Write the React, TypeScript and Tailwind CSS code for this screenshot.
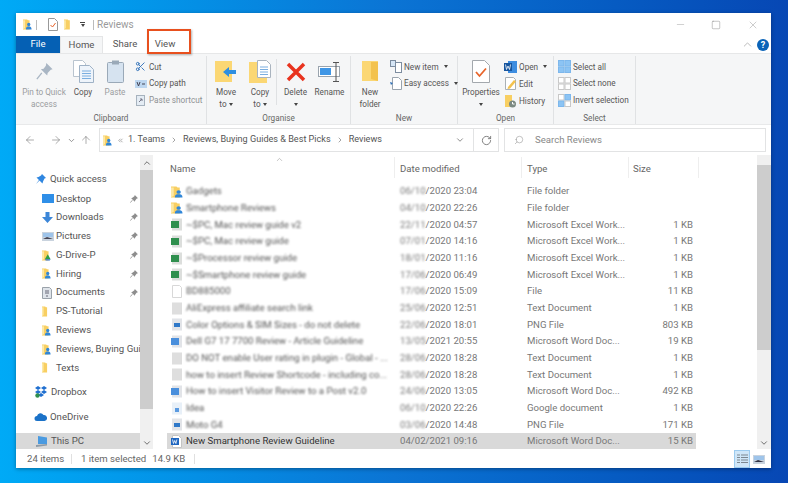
import { ReactNode } from "react";
import { ArrowLeft, ArrowRight, ArrowUp, ChevronDown, ChevronRight, ChevronUp, ChevronsLeft, RotateCw, Scissors, Search, Minus, Square, X } from "lucide-react";

// small file-explorer icons
const Folder = ({ w = 8, h = 13, person = false, drive = false }: { w?: number; h?: number; person?: boolean; drive?: boolean }) => (
  <svg width={w + 3} height={h} viewBox="0 0 11 13" preserveAspectRatio="none" className="shrink-0">
    <path d="M0 0.5h5l1 1h2v11H0z" fill="#f8cf62" />
    <path d="M0 1.5h2.5v9L0 12.5z" fill="#fde9a6" />
    {person && <circle cx="7" cy="6.5" r="2" fill="#2f86d8" />}
    {person && <path d="M3.5 12.5c0-3 1.5-3.5 3.5-3.5s3.5.5 3.5 3.5z" fill="#2f86d8" />}
    {drive && <path d="M7 5l3.5 6h-7z" fill="#2f9e44" />}
    {drive && <path d="M3.5 11h7l-1 1.5h-5z" fill="#2f70d8" />}
  </svg>
);

const Doc = ({ children }: { children?: ReactNode }) => (
  <svg width="12" height="13" viewBox="0 0 12 13" className="shrink-0">
    <path d="M1.5.5h6l3 3v9h-9z" fill="#fff" stroke="#c4c4c4" />
    {children}
  </svg>
);

const FileIcon = ({ kind }: { kind: string }) => {
  if (kind === "folder") return <span className="blur-[.6px] flex"><Folder w={9} h={12} person /></span>;
  if (kind === "excel")
    return (
      <span className="blur-[.7px] flex">
        <svg width="12" height="13" viewBox="0 0 12 13">
          <rect x="1" y="0.5" width="10" height="12" fill="#dcdedc" />
          <rect x="0" y="3" width="8" height="7" fill="#2f8f4e" />
        </svg>
      </span>
    );
  if (kind === "text")
    return (
      <span className="blur-[.7px] flex">
        <svg width="12" height="13" viewBox="0 0 12 13">
          <rect x="1" y="0.5" width="10" height="12" fill="#dedede" />
        </svg>
      </span>
    );
  if (kind === "png")
    return (
      <span className="blur-[.7px] flex">
        <svg width="12" height="13" viewBox="0 0 12 13">
          <rect x="1" y="0.5" width="10" height="12" fill="#e2e4e8" />
          <rect x="3" y="5" width="6" height="4" fill="#2f78c8" />
        </svg>
      </span>
    );
  if (kind === "gdoc")
    return (
      <span className="blur-[.6px] flex">
        <svg width="12" height="13" viewBox="0 0 12 13">
          <rect x="1" y="0.5" width="10" height="12" fill="#e8f0f8" />
          <rect x="4" y="6" width="4" height="4" fill="#5b9ae0" />
        </svg>
      </span>
    );
  if (kind === "word")
    return (
      <span className="blur-[.7px] flex">
        <svg width="12" height="13" viewBox="0 0 12 13">
          <rect x="1" y="0.5" width="10" height="12" fill="#e2e4e8" />
          <rect x="0" y="3" width="8" height="7" fill="#4a8fdc" />
        </svg>
      </span>
    );
  if (kind === "wordsharp")
    return (
      <Doc>
        <rect x="0" y="3" width="8" height="7" fill="#1f66c0" />
        <path d="M1.5 4.5l1 4 1.2-3 1.2 3 1-4" stroke="#fff" strokeWidth=".8" fill="none" />
      </Doc>
    );
  return (
    <span className="blur-[.4px] flex">
      <svg width="12" height="13" viewBox="0 0 12 13" className="shrink-0">
        <path d="M1.5.5h7l2 2v10h-9z" fill="#fff" stroke="#d8d8d8" />
      </svg>
    </span>
  );
};

const SmallPin = () => (
  <svg width="8" height="8" viewBox="0 0 10 10">
    <path d="M6 0l4 4-1.5.5L6.5 7 6 8.5 1.5 4 3 3.5 5.5 1.5z" fill="#8d8d8d" />
    <path d="M3 6.5L0.5 9.5" stroke="#8d8d8d" />
  </svg>
);

const DownTri = () => <span className="inline-block w-0 h-0 border-x-[2.5px] border-x-transparent border-t-[3px] border-t-[#444]" />;

const LargeBtn = ({ w, icon, l1, l2, gray, tri }: { w: number; icon: ReactNode; l1: string; l2?: string; gray?: boolean; tri?: boolean }) => (
  <div className={`flex flex-col items-center shrink-0 ${gray ? "text-[#9b9da0]" : "text-[#555]"}`} style={{ width: w }}>
    <div className="h-[29px] shrink-0 pt-[2px] flex items-center justify-center">{icon}</div>
    <div className="leading-[12px] h-[12px] shrink-0 mt-[1px] whitespace-nowrap">{l1}</div>
    <div className="leading-[12px] flex items-center gap-[2px] h-[12px] shrink-0 whitespace-nowrap">
      {l2}
      {tri && <DownTri />}
    </div>
  </div>
);

const SmallBtn = ({ icon, label, gray, tri, h = 16.7 }: { icon: ReactNode; label: string; gray?: boolean; tri?: boolean; h?: number }) => (
  <div className={`flex items-center gap-[2px] whitespace-nowrap ${gray ? "text-[#8f9193]" : "text-[#555]"}`} style={{ height: h }}>
    <span className="w-[13px] flex justify-center shrink-0">{icon}</span>
    {label}
    {tri && <span className="ml-[3px] flex"><DownTri /></span>}
  </div>
);

const RibbonGroup = ({ w, label, children }: { w: number; label: string; children: ReactNode }) => (
  <div className="flex flex-col shrink-0 border-r border-[#e0e2e4] mt-[2px]" style={{ width: w }}>
    <div className="flex-1 flex min-h-0">{children}</div>
    <div className="h-[12px] leading-[12px] text-center text-[#666]">{label}</div>
  </div>
);

const FolderLarge = () => (
  <svg width="16" height="21" viewBox="0 0 16 21">
    <path d="M0 0h16v20H0z" fill="#fbd774" />
    <path d="M9 1h7v19l-7-2z" fill="#f3c24e" />
  </svg>
);

const Grid4 = ({ a, b, c, d }: { a: string; b: string; c: string; d: string }) => (
  <svg width="13" height="13" viewBox="0 0 13 13">
    <rect x=".5" y=".5" width="5.5" height="5.5" fill={a} stroke={a === "#fff" ? "#c8c8c8" : "#7db7ec"} />
    <rect x="7" y=".5" width="5.5" height="5.5" fill={b} stroke={b === "#fff" ? "#c8c8c8" : "#7db7ec"} />
    <rect x=".5" y="7" width="5.5" height="5.5" fill={c} stroke={c === "#fff" ? "#c8c8c8" : "#7db7ec"} />
    <rect x="7" y="7" width="5.5" height="5.5" fill={d} stroke={d === "#fff" ? "#c8c8c8" : "#7db7ec"} />
  </svg>
);

const Ribbon = () => (
  <div className="h-[72px] bg-[#f5f6f7] border-t border-[#e6e7e8] border-b border-b-[#e8e9ea] flex text-[8.2px] shrink-0">
    <RibbonGroup w={191} label="Clipboard">
      <div className="flex pl-[7px]">
        <LargeBtn
          w={42}
          gray
          icon={
            <svg width="17" height="18" viewBox="0 0 18 20">
              <path d="M11 0l7 7-2 .5-3.5 3.500-.5 3L5 7l3-.5L10.500 3z" fill="#a9b6c4" />
              <path d="M6 11l-5.500 7" stroke="#a9b6c4" strokeWidth="1.500" />
            </svg>
          }
          l1="Pin to Quick"
          l2="access"
        />
        <LargeBtn
          w={36}
          icon={
            <svg width="21" height="23" viewBox="0 0 21 23">
              <path d="M.5.5h9l3 3v13H.5z" fill="#fff" stroke="#b9c4cf" />
              <path d="M6.500 5.500h10l4 4v13h-14z" fill="#eef4fb" stroke="#9fb2c6" />
              <path d="M9 11h9M9 13.500h9M9 16h9M9 18.500h9" stroke="#7aaee0" />
            </svg>
          }
          l1="Copy"
        />
        <LargeBtn
          w={28}
          gray
          icon={
            <svg width="17" height="23" viewBox="0 0 17 23">
              <rect x=".5" y="2.500" width="16" height="20" rx="1" fill="#d6e3f0" stroke="#9aa9b8" />
              <rect x="5" y=".5" width="7" height="4" fill="#9aa9b8" />
            </svg>
          }
          l1="Paste"
        />
        <div className="pl-[5px] pt-[2.500px]">
          <SmallBtn icon={<Scissors size={11} className="text-[#2f70b8]" />} label="Cut" />
          <SmallBtn
            icon={
              <svg width="12" height="8" viewBox="0 0 12 8">
                <rect width="12" height="8" fill="#bcd6f0" />
                <path d="M2 2l1.500 4L5 2M7 4h3" stroke="#445" fill="none" />
              </svg>
            }
            label="Copy path"
          />
          <SmallBtn
            gray
            icon={
              <svg width="9" height="12" viewBox="0 0 9 12">
                <rect x=".5" y="1.500" width="8" height="10" fill="#e4ecf4" stroke="#a6b2be" />
                <path d="M3 8l3-3M4 5h2v2" stroke="#778" fill="none" />
              </svg>
            }
            label="Paste shortcut"
          />
        </div>
      </div>
    </RibbonGroup>
    <RibbonGroup w={144} label="Organise">
      <div className="flex pl-[1px]">
        <LargeBtn
          w={36}
          tri
          icon={
            <svg width="22" height="22" viewBox="0 0 22 22">
              <path d="M0 0h17v21H0z" fill="#fbd774" />
              <path d="M8 11l6-5v3h7v4h-7v3z" fill="#2f8fe0" />
            </svg>
          }
          l1="Move"
          l2="to"
        />
        <LargeBtn
          w={32}
          tri
          icon={
            <svg width="22" height="24" viewBox="0 0 22 24">
              <path d="M0 2h18v21H0z" fill="#fbd774" />
              <path d="M8.500.5h9l4 4v13h-13z" fill="#fff" stroke="#aab4bf" />
              <path d="M11 7h8M11 9.500h8M11 12h8M11 14.500h8" stroke="#7aaee0" />
            </svg>
          }
          l1="Copy"
          l2="to"
        />
        <div className="w-px bg-[#dfe1e3] h-[46px] mt-[3px] mr-[1px]" />
        <LargeBtn
          w={35}
          tri
          icon={
            <svg width="20" height="20" viewBox="0 0 20 20">
              <path d="M2 2l16 16M18 2L2 18" stroke="#e8331e" strokeWidth="3.500" />
            </svg>
          }
          l1="Delete"
        />
        <LargeBtn
          w={33}
          icon={
            <svg width="24" height="20" viewBox="0 0 24 20">
              <rect x=".5" y="4.500" width="21" height="10" fill="#fff" stroke="#9aa4ae" />
              <rect x="2" y="6" width="11" height="7" fill="#3f96e6" />
              <path d="M18 1v18M15 .5h6M15 19.500h6" stroke="#555" />
            </svg>
          }
          l1="Rename"
        />
      </div>
    </RibbonGroup>
    <RibbonGroup w={107} label="New">
      <div className="flex">
        <LargeBtn w={38} icon={<FolderLarge />} l1="New" l2="folder" />
        <div className="pt-[2.500px]">
          <SmallBtn
            tri
            icon={
              <svg width="12" height="13" viewBox="0 0 12 13">
                <rect x=".5" y=".5" width="5" height="6" fill="#d6e6f6" stroke="#7d8da0" />
                <rect x="5.500" y="2.500" width="6" height="10" fill="#fff" stroke="#7d8da0" />
              </svg>
            }
            label="New item"
          />
          <SmallBtn
            tri
            icon={
              <svg width="12" height="13" viewBox="0 0 12 13">
                <path d="M2.500.5h6l3 3v9h-9z" fill="#fff" stroke="#9aa4ae" />
                <path d="M0 5l3 1-2 2z" fill="#2f70b8" />
              </svg>
            }
            label="Easy access"
          />
        </div>
      </div>
    </RibbonGroup>
    <RibbonGroup w={96} label="Open">
      <div className="flex">
        <LargeBtn
          w={46}
          tri
          icon={
            <svg width="18" height="23" viewBox="0 0 18 23">
              <path d="M.5.5h12l5 5v17H.5z" fill="#fff" stroke="#a3a8ad" />
              <path d="M4 12l3.500 4L14 8.500" stroke="#e8642a" strokeWidth="1.800" fill="none" />
            </svg>
          }
          l1="Properties"
        />
        <div className="pt-[2.500px]">
          <SmallBtn
            tri
            icon={
              <svg width="13" height="12" viewBox="0 0 13 12">
                <rect x="4" width="9" height="12" fill="#3d8de0" />
                <rect y="2" width="8" height="8" fill="#17569f" />
                <path d="M1.500 3.500l1 5 1.500-3.500 1.500 3.500 1-5" stroke="#fff" strokeWidth=".8" fill="none" />
              </svg>
            }
            label="Open"
          />
          <SmallBtn
            h={17.5}
            icon={
              <svg width="12" height="13" viewBox="0 0 12 13">
                <path d="M.5.5h8l2 2v10H.5z" fill="#fff" stroke="#aab0b5" />
                <path d="M3 10l6-7 2 1.500-6 7-2.500.5z" fill="#f3c24e" />
              </svg>
            }
            label="Edit"
          />
          <SmallBtn
            h={17.5}
            icon={
              <svg width="11" height="13" viewBox="0 0 11 13">
                <path d="M0 0h7v12H0z" fill="#f8cf62" />
                <circle cx="7.500" cy="9" r="3.500" fill="#7c8a82" />
                <path d="M7.500 7v2h2" stroke="#fff" fill="none" />
              </svg>
            }
            label="History"
          />
        </div>
      </div>
    </RibbonGroup>
    <RibbonGroup w={82} label="Select">
      <div className="pl-[4px] pt-[2.500px]">
        <SmallBtn icon={<Grid4 a="#8cc4f4" b="#8cc4f4" c="#8cc4f4" d="#8cc4f4" />} label="Select all" />
        <SmallBtn icon={<Grid4 a="#fff" b="#fff" c="#fff" d="#fff" />} label="Select none" />
        <SmallBtn icon={<Grid4 a="#fff" b="#8cc4f4" c="#8cc4f4" d="#fff" />} label="Invert selection" />
      </div>
    </RibbonGroup>
  </div>
);

const navItems: { label: string; icon: ReactNode; pin?: boolean }[] = [
  {
    label: "Desktop",
    pin: true,
    icon: (
      <svg width="12" height="9" viewBox="0 0 12 9">
        <rect width="12" height="9" fill="#2f8fe8" />
      </svg>
    ),
  },
  {
    label: "Downloads",
    pin: true,
    icon: (
      <svg width="11" height="11" viewBox="0 0 11 11">
        <path d="M3.500 0h4v5H11L5.500 11 0 5h3.500z" fill="#3b86d8" />
      </svg>
    ),
  },
  {
    label: "Pictures",
    pin: true,
    icon: (
      <svg width="12" height="9" viewBox="0 0 12 9">
        <rect width="12" height="9" fill="#c9d3de" />
        <rect x="1" y="1" width="10" height="4" fill="#9ec4ea" />
        <path d="M1 7l4-2 6 2z" fill="#445" />
      </svg>
    ),
  },
  { label: "G-Drive-P", pin: true, icon: <Folder drive w={6} h={11} /> },
  { label: "Hiring", pin: true, icon: <Folder person w={6} h={11} /> },
  {
    label: "Documents",
    pin: true,
    icon: (
      <svg width="10" height="12" viewBox="0 0 10 12">
        <path d="M.5.5h7l2 2v9h-9z" fill="#dfe4ea" stroke="#9aa2aa" />
        <path d="M3 4h4M3 6h4M5 8v2" stroke="#667" />
      </svg>
    ),
  },
  { label: "PS-Tutorial", icon: <Folder w={4} h={11} /> },
  { label: "Reviews", icon: <Folder person w={6} h={11} /> },
  { label: "Reviews, Buying Guides & Best Picks", icon: <Folder person w={6} h={11} /> },
  { label: "Texts", icon: <Folder w={4} h={11} /> },
];

const files = [
  { name: "Gadgets", pre: "06/10", date: "/2020 23:04", type: "File folder", size: "", icon: "folder" },
  { name: "Smartphone Reviews", pre: "04/10", date: "/2020 22:26", type: "File folder", size: "", icon: "folder" },
  { name: "~$PC, Mac review guide v2", pre: "22/11", date: "/2020 04:57", type: "Microsoft Excel Work...", size: "1 KB", icon: "excel" },
  { name: "~$PC, Mac review guide", pre: "07/01", date: "/2020 14:16", type: "Microsoft Excel Work...", size: "1 KB", icon: "excel" },
  { name: "~$Processor review guide", pre: "18/01", date: "/2020 11:16", type: "Microsoft Excel Work...", size: "1 KB", icon: "excel" },
  { name: "~$Smartphone review guide", pre: "17/06", date: "/2020 06:49", type: "Microsoft Excel Work...", size: "1 KB", icon: "excel" },
  { name: "BD885000", pre: "17/06", date: "/2020 15:09", type: "File", size: "11 KB", icon: "blank" },
  { name: "AliExpress affiliate search link", pre: "25/06", date: "/2020 12:51", type: "Text Document", size: "1 KB", icon: "text" },
  { name: "Color Options & SIM Sizes - do not delete", pre: "22/06", date: "/2020 18:01", type: "PNG File", size: "803 KB", icon: "png" },
  { name: "Dell G7 17 7700 Review - Article Guideline", pre: "13/05", date: "/2021 20:55", type: "Microsoft Word Doc...", size: "19 KB", icon: "word" },
  { name: "DO NOT enable User rating in plugin - Global - ...", pre: "28/06", date: "/2020 18:28", type: "Text Document", size: "1 KB", icon: "text" },
  { name: "how to insert Review Shortcode - including co...", pre: "28/06", date: "/2020 18:28", type: "Text Document", size: "1 KB", icon: "text" },
  { name: "How to insert Visitor Review to a Post v2.0", pre: "24/06", date: "/2020 13:05", type: "Microsoft Word Doc...", size: "492 KB", icon: "word" },
  { name: "Idea", pre: "06/10", date: "/2020 22:26", type: "Google document", size: "1 KB", icon: "gdoc" },
  { name: "Moto G4", pre: "03/06", date: "/2020 14:48", type: "PNG File", size: "171 KB", icon: "png" },
];

const Row = ({ f, selected }: { f: (typeof files)[number]; selected?: boolean }) => (
  <div className={`flex h-[16.67px] pt-[1px] items-center w-[529px] whitespace-nowrap ${selected ? "bg-[#d9d9d9]" : ""}`}>
    <div className="w-[228px] flex items-center pl-[4px] gap-[3px] shrink-0">
      <span className="w-[12px] flex justify-center"><FileIcon kind={selected ? "wordsharp" : f.icon} /></span>
      <span className={selected ? "text-[#333]" : "text-[#555] blur-[1.1px]"}>{f.name}</span>
    </div>
    <div className="w-[127px] pl-[5px] shrink-0 text-[#777]">
      <span className={selected ? "" : "inline-block blur-[1.1px]"}>{f.pre}</span>
      {f.date}
    </div>
    <div className="w-[107px] pl-[5px] shrink-0 text-[#777]">{f.type}</div>
    <div className="w-[67px] pr-[3px] text-right shrink-0 text-[#777]">{f.size}</div>
  </div>
);

export default function App() {
  return (
    <div
      className="w-[788px] h-[483px] overflow-hidden pt-[13px] pl-[16px] bg-linear-to-r from-[#00aaf6] via-[#0b74d4] to-[#0747b4]"
      style={{ fontFamily: "Roboto, sans-serif" }}
    >
      <div className="w-[755px] h-[455px] bg-white flex flex-col shadow-[0_1px_4px_rgba(0,0,0,.35)] text-[9.6px]">
        {/* title bar */}
        <div className="h-[23px] flex items-center shrink-0 pl-[7px]">
          <Folder person w={6} h={11} />
          <div className="w-px h-[10px] bg-[#bbb] ml-[4px]" />
          <div className="ml-[11px] flex">
            <svg width="10" height="13" viewBox="0 0 10 13">
              <path d="M.5.5h6l3 3v9h-9z" fill="#fff" stroke="#999" />
              <path d="M2.500 7l2 2 3-4" stroke="#e8642a" fill="none" />
            </svg>
          </div>
          <div className="ml-[6px] flex"><Folder w={5} h={11} /></div>
          <div className="ml-[8px] flex flex-col items-center gap-[1px]">
            <div className="w-[5px] h-px bg-[#444]" />
            <DownTri />
          </div>
          <div className="w-px h-[10px] bg-[#bbb] ml-[8px]" />
          <div className="ml-[3px] text-[#9a9a9a] text-[10px]">Reviews</div>
          <div className="ml-auto flex items-center text-[#9a9a9a]">
            <Minus size={11} strokeWidth={1} className="mr-[25px]" />
            <Square size={10} strokeWidth={1} className="mr-[26px] text-[#777]" />
            <X size={12} strokeWidth={1} className="mr-[12px]" />
          </div>
        </div>

        {/* tabs */}
        <div className="h-[17px] flex items-stretch shrink-0 text-[#555] relative z-10">
          <div className="w-[44px] bg-[#0560b4] text-white flex items-center justify-center">File</div>
          <div className="w-[43px] bg-[#f5f6f7] border-x border-t border-[#e4e5e6] flex items-center justify-center">Home</div>
          <div className="w-[44px] flex items-center justify-center">Share</div>
          <div className="w-[44px] flex items-center justify-center pr-[8px] relative">
            View
            <div className="absolute left-0 top-[-7px] w-[44px] h-[25px] border-[2.500px] border-[#e8501e] shadow-[1px_1px_2px_rgba(0,0,0,.3)]" />
          </div>
          <div className="ml-auto flex items-center pr-[2px] gap-[3px]">
            <ChevronUp size={13} strokeWidth={1.2} className="text-[#999]" />
            <div className="w-[12px] h-[12px] rounded-full bg-[#0a63b8] text-white font-bold text-[9px] leading-[12px] text-center">?</div>
          </div>
        </div>

        <Ribbon />

        {/* address row */}
        <div className="h-[30px] flex items-center shrink-0 text-[#555] text-[9.100px]">
          <div className="w-[83px] flex items-center pl-[8px] text-[#777] shrink-0">
            <ArrowLeft size={12} strokeWidth={1.2} />
            <ArrowRight size={12} strokeWidth={1.2} className="ml-[14px]" />
            <ChevronDown size={9} className="ml-[5px]" />
            <ArrowUp size={12} strokeWidth={1.2} className="ml-[4px]" />
          </div>
          <div className="w-[400px] h-[24px] border border-[#e2e3e4] flex items-center shrink-0 whitespace-nowrap">
            <div className="w-[374px] flex items-center pl-[3px] h-full border-r border-[#e2e3e4]">
              <Folder person w={6} h={11} />
              <ChevronsLeft size={7} className="ml-[5px] text-[#777]" />
              <span className="ml-[4px]">1. Teams</span>
              <ChevronRight size={8} className="mx-[5px] text-[#777]" />
              <span>Reviews, Buying Guides &amp; Best Picks</span>
              <ChevronRight size={8} className="mx-[5px] text-[#777]" />
              <span>Reviews</span>
              <ChevronDown size={10} className="ml-auto mr-[8px] text-[#777]" />
            </div>
            <div className="flex-1 flex justify-center">
              <RotateCw size={11} className="text-[#777]" />
            </div>
          </div>
          <div className="ml-[5px] w-[262px] h-[24px] border border-[#e2e3e4] flex items-center pl-[9px] text-[#888] shrink-0">
            <Search size={10} strokeWidth={1.2} className="-scale-x-100 text-[#888]" />
            <span className="ml-[11px] text-[9.600px]">Search Reviews</span>
          </div>
        </div>

        {/* main */}
        <div className="flex-1 flex min-h-0">
          <div className="w-[124px] shrink-0 overflow-hidden text-[#555] flex flex-col pt-[15px]">
            <div className="h-[18.800px] flex items-center pl-[20px] gap-[4px] whitespace-nowrap shrink-0">
              <svg width="10" height="10" viewBox="0 0 10 10">
                <path d="M6 0l4 4-1.500.5L7 7.500 6.500 9.500 3.500 6.500 0 10l3-4L.5 3.500l2-.5L5 1.500z" fill="#2f86e0" />
              </svg>
              Quick access
            </div>
            {navItems.map((n) => (
              <div key={n.label} className="h-[18.800px] flex items-center pl-[25px] pt-[1px] whitespace-nowrap relative shrink-0">
                <span className="w-[15px] flex justify-start shrink-0 pl-[1px]">{n.icon}</span>
                <span>{n.label}</span>
                {n.pin && <span className="absolute right-[2px] flex bg-white"><SmallPin /></span>}
              </div>
            ))}
            <div className="h-[18.800px] mt-[6.200px] flex items-center pl-[19px] gap-[3px] whitespace-nowrap shrink-0">
              <svg width="13" height="12" viewBox="0 0 13 12">
                <path d="M3 0l3 2-3 2-3-2zM9 0l3 2-3 2-3-2zM3 4l3 2-3 2-3-2zM9 4l3 2-3 2-3-2zM6 7l3 2-3 2-3-2z" fill="#1f6fd0" />
                <circle cx="2.500" cy="9.500" r="2.200" fill="#2f8f4e" />
              </svg>
              Dropbox
            </div>
            <div className="h-[18.800px] mt-[6.200px] flex items-center pl-[18px] gap-[3px] whitespace-nowrap shrink-0">
              <svg width="13" height="8" viewBox="0 0 13 8">
                <path d="M3 8a2.500 2.500 0 010-5 3.500 3.500 0 016.500-1 3 3 0 011 6z" fill="#1b72c8" />
              </svg>
              OneDrive
            </div>
            <div className="h-[17px] mt-[6.200px] flex items-center pl-[20px] gap-[3px] whitespace-nowrap shrink-0 bg-[#d9d9d9]">
              <svg width="12" height="11" viewBox="0 0 12 11">
                <path d="M2 0l9 1.500V8H2z" fill="#4a9ae0" />
                <path d="M0 9l11-1v1.500L0 11z" fill="#8d9aa6" />
              </svg>
              This PC
            </div>
          </div>

          {/* nav scrollbar */}
          <div className="w-[13px] shrink-0 bg-[#f0f0f0] flex flex-col items-center">
            <div className="h-[15px] flex items-center text-[#555] shrink-0"><ChevronUp size={10} /></div>
            <div className="w-full h-[239px] bg-[#cdcdcd] shrink-0" />
            <div className="flex-1 flex items-end pb-[1px] text-[#555]"><ChevronDown size={10} /></div>
          </div>

          {/* file list */}
          <div className="flex-1 min-w-0 pl-[14px] relative">
            <ChevronUp size={9} strokeWidth={1.5} className="absolute left-[122px] top-0 text-[#999]" />
            <div className="h-[27.700px] w-[590px] flex text-[#666] pt-[2px]">
              <div className="w-[228px] pl-[3px] pt-[5px] border-r border-[#eee] h-[21px] shrink-0">Name</div>
              <div className="w-[127px] pl-[5px] pt-[5px] border-r border-[#eee] h-[21px] shrink-0">Date modified</div>
              <div className="w-[107px] pl-[5px] pt-[5px] border-r border-[#eee] h-[21px] shrink-0">Type</div>
              <div className="w-[70px] pl-[4px] pt-[5px] border-r border-[#eee] h-[21px] shrink-0">Size</div>
            </div>
            {files.map((f) => (
              <Row key={f.name} f={f} />
            ))}
            <Row
              selected
              f={{ name: "New Smartphone Review Guideline", pre: "04/02", date: "/2021 09:16", type: "Microsoft Word Doc...", size: "15 KB", icon: "word" }}
            />
          </div>

          {/* list scrollbar */}
          <div className="w-[14px] shrink-0 bg-[#f0f0f0] flex flex-col items-center">
            <div className="h-[10px] shrink-0" />
            <div className="w-full h-[185px] bg-[#cdcdcd] shrink-0" />
            <div className="flex-1 flex items-end pb-[1px] text-[#555]"><ChevronDown size={10} /></div>
          </div>
        </div>

        {/* status bar */}
        <div className="h-[19px] pt-[1px] flex items-center shrink-0 text-[#666] pl-[11px]">
          <span className="w-[44px]">24 items</span>
          <div className="w-px h-[10px] bg-[#e0e0e0]" />
          <span className="ml-[9px]">1 item selected</span>
          <span className="ml-[6px]">14.9 KB</span>
          <div className="w-px h-[10px] bg-[#e0e0e0] ml-[9px]" />
          <div className="ml-auto flex items-center mr-[6px]">
            <div className="w-[16px] h-[18px] bg-[#cfe6f8] border border-[#9ccbef] flex items-center justify-center">
              <svg width="11" height="10" viewBox="0 0 11 10">
                <path d="M0 1h3M0 3.500h3M0 6h3M0 8.500h3M4 1h7M4 3.500h7M4 6h7M4 8.500h7" stroke="#7d8790" />
              </svg>
            </div>
            <div className="ml-[3px] flex">
              <svg width="12" height="9" viewBox="0 0 12 9">
                <rect width="12" height="9" fill="#c9d3de" />
                <rect x="1" y="1" width="10" height="4" fill="#9ec4ea" />
                <path d="M1 7l4-2 6 2z" fill="#334" />
              </svg>
            </div>
          </div>
        </div>
      </div>
    </div>
  );
}
